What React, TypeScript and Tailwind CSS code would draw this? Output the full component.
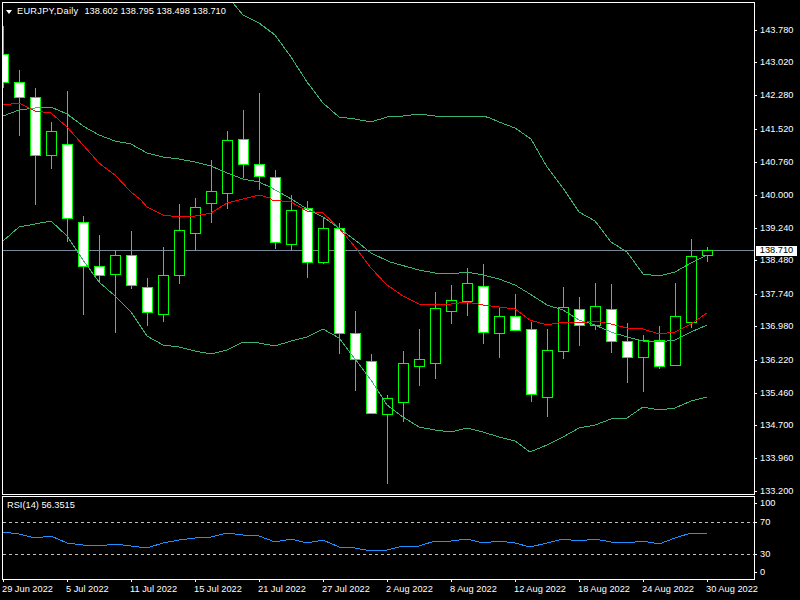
// [high, low, bodyTop, bodyBottom, white]  in page pixels, one per bar, 16px apart
type Bar = [number, number, number, number, boolean]

const BARS: Bar[] = [
  [26, 87, 54, 82, true],
  [70, 135, 82, 97, true],
  [88, 204, 97, 155, true],
  [122, 168, 131, 155, false],
  [91, 241, 144, 218, true],
  [216, 314, 222, 266, true],
  [235, 282, 266, 275, true],
  [250, 332, 255, 274, false],
  [231, 288, 255, 285, true],
  [278, 325, 287, 312, true],
  [247, 321, 275, 314, false],
  [204, 283, 230, 275, false],
  [198, 250, 207, 233, false],
  [160, 222, 191, 203, false],
  [131, 208, 140, 193, false],
  [110, 177, 139, 164, true],
  [93, 189, 164, 176, true],
  [170, 248, 177, 242, true],
  [195, 250, 210, 244, false],
  [201, 277, 208, 262, true],
  [217, 263, 228, 262, false],
  [223, 353, 228, 333, true],
  [311, 390, 333, 359, true],
  [354, 413, 361, 413, true],
  [395, 483, 398, 414, false],
  [351, 421, 363, 402, false],
  [329, 385, 359, 366, false],
  [292, 378, 308, 363, false],
  [285, 323, 300, 311, false],
  [268, 315, 283, 301, false],
  [264, 343, 286, 332, true],
  [308, 357, 316, 333, false],
  [294, 330, 316, 330, true],
  [322, 401, 329, 394, true],
  [329, 416, 350, 397, false],
  [287, 358, 307, 351, false],
  [297, 345, 309, 325, true],
  [283, 329, 306, 325, false],
  [284, 352, 309, 341, true],
  [323, 382, 341, 357, true],
  [335, 391, 340, 357, false],
  [326, 368, 340, 366, true],
  [283, 365, 316, 365, false],
  [239, 327, 256, 322, false],
  [247, 261, 250, 255, false],
]

const TOP_BAND = '233,3 243,15 259,23 275,35 291,57 307,82 323,103 339,117 355,119 371,122 387,117 403,116 419,114 435,116 451,116 467,116 483,116 490,118 499,122 515,128 531,139 547,167 563,188 579,212 595,221 611,242 627,252 643,274 659,276 675,272 691,263 707,255'
const MID_BAND = '3,116 19,110 35,108 43,107 51,107 67,114 83,126 99,135 115,141 131,144 147,153 163,157 179,159 195,162 211,166 227,173 243,179 259,182 270,187 293,200 307,209 323,217 339,228 355,240 371,253 390,262 419,270 435,273 459,273 467,272 483,275 499,279 515,285 530,294 547,305 563,310 579,320 595,325 611,332 627,337 643,341 659,342 675,340 691,332 707,325'
const LOW_BAND = '3,241 19,227 35,224 51,221 67,236 83,260 99,282 115,296 131,312 147,336 163,345 179,347 195,351 211,354 227,350 243,342 259,343 275,346 291,341 307,337 323,329 339,338 355,359 371,380 387,405 403,417 419,427 435,430 451,432 467,428 483,432 499,437 515,441 530,452 547,445 563,437 579,428 595,425 611,419 627,418 643,407 659,410 675,408 691,401 707,397'
const MA = '3,105 19,103 35,111 51,113 67,127 83,145 99,163 115,175 131,192 141,200 147,207 163,215 179,217 195,216 211,213 227,203 239,200 259,195 270,198 272,200 291,202 307,211 323,213 339,228 355,247 371,268 387,285 403,296 419,304 435,305 451,304 467,302 483,305 499,307 515,309 530,320 547,325 563,322 579,323 595,321 611,324 627,328 643,329 659,334 675,332 691,324 707,313'
const RSI = '3,532 19,534 35,538 51,536 67,543 83,545 99,546 115,544 131,546 147,548 163,543 179,540 195,538 211,537 227,533 243,535 259,536 275,542 291,539 307,543 323,540 339,547 355,548 371,551 387,550 403,546 419,546 435,541 451,541 467,539 483,543 499,541 515,543 530,547 547,543 563,539 579,541 595,539 611,542 627,543 643,541 659,544 675,538 691,533 707,533'

// y is the centre of each label on the price scale
const PRICES: [string, number][] = [
  ['143.780', 30], ['143.020', 62], ['142.280', 95], ['141.520', 129], ['140.760', 162],
  ['140.000', 195], ['139.240', 228], ['138.480', 260], ['137.740', 294], ['136.980', 326],
  ['136.220', 360], ['135.460', 393], ['134.700', 425], ['133.960', 458], ['133.200', 491],
]

const RSI_SCALE: [string, number][] = [['100', 503], ['70', 522], ['30', 554], ['0', 572]]

const DATES = [
  '29 Jun 2022', '5 Jul 2022', '11 Jul 2022', '15 Jul 2022', '21 Jul 2022', '27 Jul 2022',
  '2 Aug 2022', '8 Aug 2022', '12 Aug 2022', '18 Aug 2022', '24 Aug 2022', '30 Aug 2022',
]

function Scale({ items, top }: { items: [string, number][]; top: number }) {
  return (
    <div className="flex flex-col">
      {items.map(([label, y], i) => {
        const prev = i === 0 ? top : items[i - 1][1] + 6
        return (
          <div key={label} className="flex h-[12px] shrink-0 items-center" style={{ marginTop: y - 6 - prev }}>
            <div className="h-px w-[2px] -translate-y-px bg-white" />
            <span className="ml-[3px] leading-none">{label}</span>
          </div>
        )
      })}
    </div>
  )
}

function Chart() {
  return (
    <svg className="block" width="751" height="491" viewBox="3 3 751 491" shapeRendering="crispEdges">
      <line x1="3" x2="754" y1="250.5" y2="250.5" stroke="#778899" />
      {BARS.map(([high, low], i) => {
        const x = 3.5 + 16 * i
        return <line key={i} x1={x} x2={x} y1={high} y2={low + 1} stroke="#00ff00" />
      })}
      {BARS.map(([, , top, bottom, white], i) => (
        <rect
          key={i}
          x={16 * i - 1.5}
          y={top + 0.5}
          width="10"
          height={bottom - top}
          fill={white ? '#ffffff' : '#000000'}
          stroke="#00ff00"
        />
      ))}
      <polyline points={TOP_BAND} fill="none" stroke="#3cb371" />
      <polyline points={MID_BAND} fill="none" stroke="#3cb371" />
      <polyline points={LOW_BAND} fill="none" stroke="#3cb371" />
      <polyline points={MA} fill="none" stroke="#ff0000" />
    </svg>
  )
}

function RsiChart() {
  return (
    <svg className="block" width="751" height="82" viewBox="3 497 751 82" shapeRendering="crispEdges">
      <line x1="3" x2="754" y1="522.5" y2="522.5" stroke="#c0c0c0" strokeDasharray="3 3" />
      <line x1="3" x2="754" y1="554.5" y2="554.5" stroke="#c0c0c0" strokeDasharray="3 3" />
      <polyline points={RSI} fill="none" stroke="#1e90ff" />
    </svg>
  )
}

export default function App() {
  return (
    <div className="h-[600px] w-[800px] overflow-hidden bg-black pl-[2px] pt-[2px] text-[9.25px] text-white [font-family:'Liberation_Sans',sans-serif]">
      <div className="flex h-[493px]">
        <div className="relative h-[493px] w-[753px] shrink-0 border border-white">
          <Chart />
          <div className="absolute left-[3px] top-[2px] flex items-center whitespace-pre">
            <div className="h-0 w-0 border-x-[3.5px] border-t-[4px] border-x-transparent border-t-white" />
            <span className="ml-[5px] tracking-[0.25px]">EURJPY,Daily</span>
            <span className="ml-[6px]">138.602 138.795 138.498 138.710</span>
          </div>
        </div>
        <div className="relative w-[45px]">
          <Scale items={PRICES} top={1} />
          <div className="absolute left-px top-[244px] flex h-[10px] w-[41px] items-center justify-center bg-white leading-none text-black">
            138.710
          </div>
        </div>
      </div>

      <div className="mt-px flex h-[84px]">
        <div className="relative h-[84px] w-[753px] shrink-0 border border-white">
          <RsiChart />
          <span className="absolute left-[4px] top-[4px] leading-none">RSI(14) 56.3515</span>
        </div>
        <Scale items={RSI_SCALE} top={495} />
      </div>

      <div className="flex">
        {DATES.map((d) => (
          <div key={d} className="w-[64px] shrink-0 whitespace-nowrap">
            <div className="ml-px h-[2px] w-px bg-white" />
            <div className="mt-[3px] leading-none">{d}</div>
          </div>
        ))}
      </div>
    </div>
  )
}
